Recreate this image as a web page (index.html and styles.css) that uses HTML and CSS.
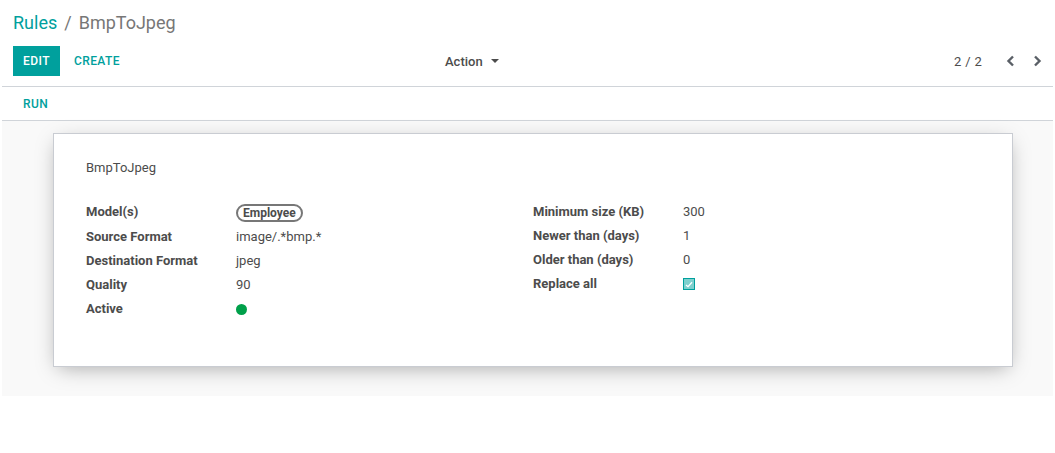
FILE: index.html
```html
<!DOCTYPE html>
<html>
<head>
<meta charset="utf-8">
<link rel="stylesheet" href="styles.css">
</head>
<body>
<div class="app">
  <div class="control-panel">
    <h1 class="breadcrumb"><span class="bc-link">Rules</span><span class="bc-sep">/</span><span class="bc-active">BmpToJpeg</span></h1>
    <div class="cp-row">
      <div class="cp-left">
        <button class="btn btn-primary">EDIT</button>
        <button class="btn btn-link">CREATE</button>
      </div>
      <div class="cp-center">
        <span class="dropdown">Action <span class="caret"></span></span>
      </div>
      <div class="cp-right">
        <span class="pager-value">2 / 2</span>
        <span class="pager-btn">
          <svg width="10" height="12" viewBox="0 0 10 12"><path d="M7 1.5 L2.5 6 L7 10.5" fill="none" stroke="#5a5f66" stroke-width="2.4"/></svg>
        </span>
        <span class="pager-btn">
          <svg width="10" height="12" viewBox="0 0 10 12"><path d="M3 1.5 L7.5 6 L3 10.5" fill="none" stroke="#5a5f66" stroke-width="2.4"/></svg>
        </span>
      </div>
    </div>
  </div>
  <div class="statusbar">
    <button class="btn btn-link run">RUN</button>
  </div>
  <div class="form-bg">
    <div class="sheet">
      <div class="sheet-name">BmpToJpeg</div>
      <div class="groups">
        <div class="group">
          <div class="label">Model(s)</div><div class="value"><span class="badge">Employee</span></div>
          <div class="label">Source Format</div><div class="value">image/.*bmp.*</div>
          <div class="label">Destination Format</div><div class="value">jpeg</div>
          <div class="label">Quality</div><div class="value">90</div>
          <div class="label">Active</div><div class="value"><span class="dot"></span></div>
        </div>
        <div class="group">
          <div class="label">Minimum size (KB)</div><div class="value">300</div>
          <div class="label">Newer than (days)</div><div class="value">1</div>
          <div class="label">Older than (days)</div><div class="value">0</div>
          <div class="label">Replace all</div><div class="value"><span class="checkbox"><svg width="8" height="7" viewBox="0 0 8 7"><path d="M1 4 L3 5.7 L7 1.3" fill="none" stroke="#ffffff" stroke-width="1.3"/></svg></span></div>
        </div>
      </div>
    </div>
  </div>
</div>
</body>
</html>
```

FILE: styles.css
```css
* { box-sizing: border-box; }
html, body { margin: 0; padding: 0; background: #ffffff; }
body {
  font-family: Roboto, "Noto Sans", sans-serif;
  font-size: 13px;
  color: #4c4c4c;
}
.app { margin: 0 2px; }

.control-panel {
  padding: 10px 11px 10px 11px;
  border-bottom: 1px solid #d0d4d9;
}
.breadcrumb {
  margin: 0;
  font-size: 18px;
  font-weight: normal;
  line-height: 26px;
  height: 26px;
}
.bc-link { color: #00a09d; }
.bc-sep { color: #777777; margin: 0 7px; }
.bc-active { color: #777777; }

.cp-row {
  display: flex;
  align-items: center;
  margin-top: 10px;
  height: 30px;
}
.cp-left { display: flex; align-items: center; width: 432px; }
.cp-center { flex: 1; display: flex; }
.cp-right { display: flex; align-items: center; justify-content: flex-end; }

.btn {
  font-family: Roboto, "Noto Sans", sans-serif;
  font-size: 12px;
  font-weight: 500;
  letter-spacing: 0.4px;
  border: none;
  background: none;
  padding: 0;
  cursor: pointer;
  line-height: 31px;
  height: 30px;
}
.btn-primary {
  background: #00a09d;
  color: #ffffff;
  width: 47px;
}
.btn-link {
  color: #00a09d;
  margin-left: 14px;
}
.dropdown { color: #4c4c4c; font-size: 13px; font-weight: 500; }
.caret {
  display: inline-block;
  width: 0; height: 0;
  border-left: 4px solid transparent;
  border-right: 4px solid transparent;
  border-top: 4px solid #4c4c4c;
  vertical-align: 3px;
  margin-left: 5px;
}
.pager-value { color: #4c4c4c; margin-right: 15px; letter-spacing: 0.3px; }
.pager-btn { display: inline-flex; width: 27px; justify-content: center; }
.pager-btn:last-child { width: 18px; justify-content: flex-end; margin-right: 0; }

.statusbar {
  height: 34px;
  display: flex;
  align-items: center;
  padding-left: 7px;
  border-bottom: 1px solid #d0d4d9;
}
.statusbar .run { margin-left: 14px; height: 33px; line-height: 35px; }

.form-bg {
  background: #f9f9f9;
  padding: 12px 39px 28px 51px;
  height: 275px;
}
.sheet {
  background: #ffffff;
  width: 960px;
  height: 234px;
  border: 1px solid #c9ccd2;
  box-shadow: 0 5px 20px -5px rgba(0,0,0,0.35);
  padding: 25px 32px 0 32px;
}
.sheet-name {
  font-size: 13px;
  line-height: 17px;
  color: #4c4c4c;
}
.groups {
  display: flex;
  margin-top: 24px;
}
.group {
  display: grid;
  grid-template-columns: 150px 1fr;
  grid-auto-rows: 24px;
  width: 447px;
}
.group:first-child { grid-template-rows: 25px; }
.label { font-weight: bold; color: #4c4c4c; line-height: 24px; }
.value { color: #4c4c4c; line-height: 24px; display: flex; align-items: center; }
.badge {
  display: inline-block;
  border: 2px solid #777777;
  border-radius: 10px;
  font-weight: bold;
  font-size: 12px;
  line-height: 14px;
  padding: 0 5px;
  color: #4c4c4c;
}
.dot {
  display: inline-block;
  width: 11px;
  height: 11px;
  border-radius: 50%;
  background: #00a04a;
}
.checkbox {
  display: inline-flex;
  align-items: center;
  justify-content: center;
  width: 12px;
  height: 12px;
  background: #7fd0ce;
  border: 1px solid #00a09d;
}
```
